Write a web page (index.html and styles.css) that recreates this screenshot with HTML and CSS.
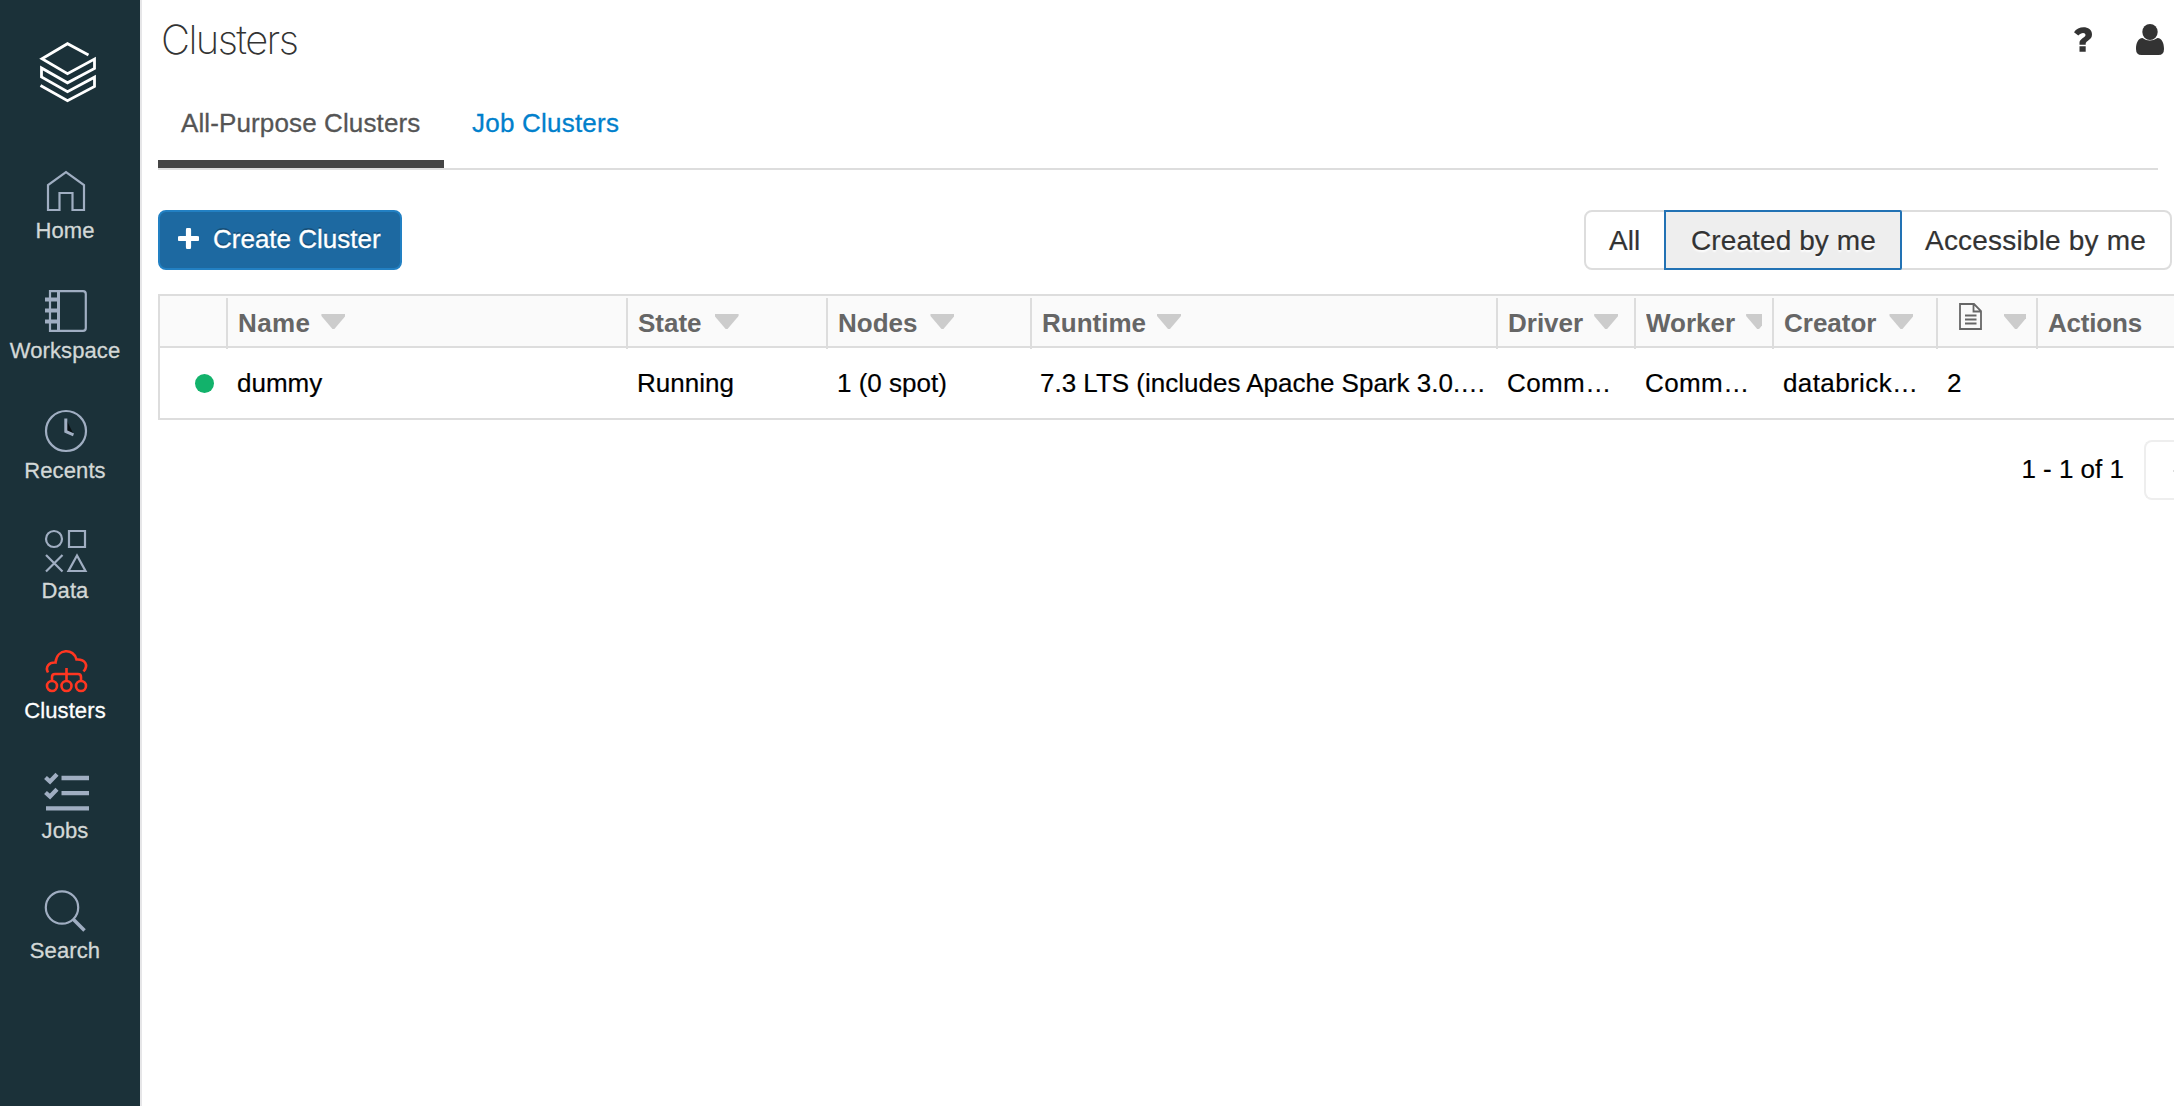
FILE: index.html
```html
<!DOCTYPE html>
<html lang="en">
<head>
<meta charset="utf-8">
<title>Clusters</title>
<link rel="stylesheet" href="styles.css">
</head>
<body>
<div class="app">
  <nav class="sidebar">
    <svg class="logo" viewBox="0 0 60 64" fill="none" stroke="#fff" stroke-width="2.8"><path d="M50.500 15L29.500 3.700L4 18.800L29.500 33.700L56.500 19V28.500L29.500 42.800L3.500 28V37L29.500 51.700L56.500 37.200V46.500L29.500 60.700L2.500 45.500"/></svg>
    <a class="item"><svg viewBox="0 0 42 42" class="icon"><path d="M3 40V15L21 2L39 15V40H27.500V23H14.500V40Z"/></svg><span>Home</span></a>
    <a class="item"><svg viewBox="0 0 42 42" class="icon"><path d="M5 1.200H38Q40.800 1.200 40.800 4V38Q40.800 40.800 38 40.800H5Z"/><path d="M13.500 1V41" stroke-width="3"/><path d="M0 9.500H14M0 20.500H14M0 31.500H14" stroke-width="4"/></svg><span>Workspace</span></a>
    <a class="item"><svg viewBox="0 0 42 42" class="icon"><circle cx="21" cy="21" r="20"/><path d="M21 9V21L29 25Z" fill="#080f12" stroke="none"/><path d="M20.800 8.500V21.500L28.500 24.800" stroke-width="3"/></svg><span>Recents</span></a>
    <a class="item"><svg viewBox="0 0 42 42" class="icon"><circle cx="9" cy="9" r="8"/><path d="M24 1H40V17H24ZM1 25L17.500 41.500M17.500 25L1 41.500M32 25.500L40.500 41H23.500Z"/></svg><span>Data</span></a>
    <a class="item active"><svg viewBox="0 0 42 42" class="icon"><path d="M3 22.500C0 17 4 12 10.500 12.500C12 -2 29 -2 31.500 9.500C40 9 44 15 38.500 21.500M21.500 18V30.500M7 30.500V27Q7 24 10 24H33Q36 24 36 27V30.500"/><circle cx="7" cy="36" r="5"/><circle cx="21.500" cy="36" r="5"/><circle cx="36" cy="36" r="5"/></svg><span>Clusters</span></a>
    <a class="item"><svg viewBox="0 0 42 42" class="icon"><path d="M16.500 8H44M16.500 23.200H44M1 38.300H44" stroke-width="4.300"/><path d="M.5 7.500L5 11.500L12 4.200M.5 22.500L5 26.500L12 19.200" stroke-width="4.200"/></svg><span>Jobs</span></a>
    <a class="item"><svg viewBox="0 0 42 42" class="icon"><circle cx="17" cy="17.500" r="16.200"/><path d="M28.500 29.500L39.500 40.500" stroke-width="3.600"/></svg><span>Search</span></a>
  </nav>
  <main class="main">
    <header class="top">
      <h1>Clusters</h1>
      <div class="tools">
        <svg class="help" viewBox="0 0 18 25"><path d="M5.500 24.700V19.300H11.700V24.700ZM5.500 17.800V15.600C5.500 11.500 11.500 10.500 11.500 7.900C11.500 5.200 7 5 4.300 8.600L0 5.300C4.500 -2.200 18 -1.200 18 7.400C18 13 11.700 13.700 11.700 16.600V17.800Z"/></svg>
        <svg class="user" viewBox="0 0 28 31"><ellipse cx="14" cy="8" rx="7.700" ry="8"/><path d="M6.500 14Q13.500 19 21.500 14C26 14.500 28 19 28 25Q28 31 22.500 31H5.500Q0 31 0 25C0 19 2 14.500 6.500 14Z"/></svg>
      </div>
    </header>
    <div class="tabs"><a class="tab selected">All-Purpose Clusters</a><a class="tab">Job Clusters</a></div>
    <div class="toolbar">
      <button class="create"><svg viewBox="0 0 21 21"><path d="M10.500 2V19M2 10.500H19" stroke="#fff" stroke-width="5.200" stroke-linecap="round"/></svg>Create Cluster</button>
      <div class="segments"><span class="seg all">All</span><span class="seg on">Created by me</span><span class="seg access">Accessible by me</span></div>
    </div>
    <div class="table">
      <div class="row head">
        <div class="cell"></div>
        <div class="cell wide">Name<i class="sort"></i></div>
        <div class="cell">State<i class="sort"></i></div>
        <div class="cell">Nodes<i class="sort"></i></div>
        <div class="cell">Runtime<i class="sort near"></i></div>
        <div class="cell">Driver<i class="sort near"></i></div>
        <div class="cell">Worker<i class="sort near"></i></div>
        <div class="cell">Creator<i class="sort"></i></div>
        <div class="cell notebooks"><svg viewBox="0 0 23 27" fill="none" stroke="#666" stroke-width="1.800"><path d="M1 1H15L22 8V26H1ZM14.500 1V8.500H22M6 12.500H17.500M6 16.500H17.500M6 20.500H17.500"/></svg><i class="sort"></i></div>
        <div class="cell tight">Actions</div>
      </div>
      <div class="row body">
        <div class="cell status"><i class="dot"></i></div>
        <div class="cell">dummy</div>
        <div class="cell">Running</div>
        <div class="cell">1 (0 spot)</div>
        <div class="cell runtime">7.3 LTS (includes Apache Spark 3.0.…</div>
        <div class="cell wide">Comm…</div>
        <div class="cell wide">Comm…</div>
        <div class="cell wide">databrick…</div>
        <div class="cell">2</div>
        <div class="cell"></div>
      </div>
    </div>
    <div class="pager"><span>1 - 1 of 1</span><div class="prev"><i></i></div></div>
  </main>
</div>
</body>
</html>
```
FILE: styles.css
```css
* { box-sizing: border-box; }
body { margin: 0; background: #fff; font-family: "Liberation Sans", Arial, sans-serif; font-size: 26px; color: #000; overflow: hidden; }
.app { display: flex; width: 2174px; height: 1106px; overflow: hidden; }

.sidebar { flex: none; width: 142px; background: #1b3139; border-right: 2px solid #e6e6e8; padding-top: 40px; }
.logo { display: block; width: 60px; height: 64px; margin: 0 0 66px 38px; }
.item { display: flex; flex-direction: column; align-items: center; gap: 6px; width: 130px; height: 120px; font-size: 22px; line-height: 26px; letter-spacing: .1px; color: #d3d8d7; -webkit-text-stroke: .3px; }
.icon { display: block; width: 42px; height: 42px; margin-left: 2px; overflow: visible; fill: none; stroke: #a0aec2; stroke-width: 2.200; }
.item.active { color: #fff; }
.item.active .icon { stroke: #ff3621; stroke-width: 2.600; }

.main { flex: 1; min-width: 0; padding-left: 16px; }
.top { display: flex; justify-content: space-between; height: 96px; padding: 16px 10px 0 3px; }
h1 { margin: 0; font: 200 40px/48px Inter, sans-serif; letter-spacing: -1.600px; color: #333; }
.tools { display: flex; gap: 44px; fill: #333; }
.help { width: 18px; height: 25px; margin-top: 11px; }
.user { width: 28px; height: 31px; margin-top: 8px; }

.tabs { display: flex; height: 74px; margin-right: 16px; border-bottom: 2px solid #ddd; }
.tab { height: 72px; padding: 12px 24px 0 28px; line-height: 30px; letter-spacing: .22px; color: #0080cc; -webkit-text-stroke: .3px; }
.tab.selected { width: 286px; padding: 12px 0 0 23px; letter-spacing: .12px; border-bottom: 8px solid #444; color: #555; }

.toolbar { display: flex; justify-content: space-between; height: 124px; padding: 40px 2px 24px 0; }
.create { display: flex; align-items: center; width: 244px; height: 60px; padding: 0 0 3px 18px; border: 2px solid #2280c3; border-radius: 8px; background: #1d69a1; color: #fff; font: 26px/30px "Liberation Sans", Arial, sans-serif; text-shadow: 0 -2px 0 rgba(0,0,0,.25); -webkit-text-stroke: .3px; }
.create svg { width: 21px; height: 21px; margin: -1px 14px 0 0; }
.segments { display: flex; height: 60px; border: 2px solid #ddd; border-radius: 8px; font-size: 28px; line-height: 58px; letter-spacing: .1px; color: #333; -webkit-text-stroke: .2px; }
.seg { white-space: nowrap; }
.all { width: 78px; padding-left: 23px; }
.on { width: 238px; margin: -2px 0; padding-left: 25px; border: 2px solid #2272b4; border-radius: 0 2px 2px 0; background: #eee; text-shadow: 0 2px 2px #fff; }
.access { width: 268px; padding-left: 23px; letter-spacing: .2px; }

.table { border: 2px solid #ddd; border-right: 0; }
.row { display: grid; grid-template-columns: 68px 400px 200px 204px 466px 138px 138px 164px 100px 136px; }
.cell { min-width: 0; overflow: hidden; white-space: nowrap; }
.head { height: 52px; background: #fafafa; border-bottom: 2px solid #ddd; padding-top: 2px; font-weight: bold; color: #666; }
.head .cell { display: flex; padding: 0 10px; line-height: 51px; border-right: 2px solid #ddd; overflow: clip; overflow-clip-margin: content-box; }
.head .cell:last-child { border-right: 0; }
.sort { flex: none; width: 24px; height: 15px; margin: 16px 0 0 13px; background: #ccc; clip-path: polygon(0 0, 100% 0, 100% 13%, 54% 100%, 46% 100%, 0 13%); }
.near { margin-left: 11px; }
.wide { letter-spacing: .4px; }
.head .wide .sort { margin-left: 11px; }
.tight { letter-spacing: -.2px; }
.notebooks svg { flex: none; width: 23px; height: 27px; margin: 5px 0 0 11px; }
.notebooks .sort { margin-left: 22px; }
.body { height: 70px; -webkit-text-stroke: .2px; }
.body .cell { padding-left: 9px; line-height: 71px; }
.body .runtime { padding-left: 8px; }
.body .status { padding: 26px 0 0 35px; }
.dot { display: block; width: 19px; height: 19px; border-radius: 50%; background: #12b26b; }

.pager { display: flex; justify-content: flex-end; margin-top: 20px; line-height: 58px; -webkit-text-stroke: .2px; }
.prev { width: 30px; height: 60px; margin-left: 20px; padding: 28px 0 0 27px; border: 2px solid #eee; border-right: 0; border-radius: 8px 0 0 8px; }
.prev i { display: block; width: 1px; height: 2px; background: #ddd; }
```
